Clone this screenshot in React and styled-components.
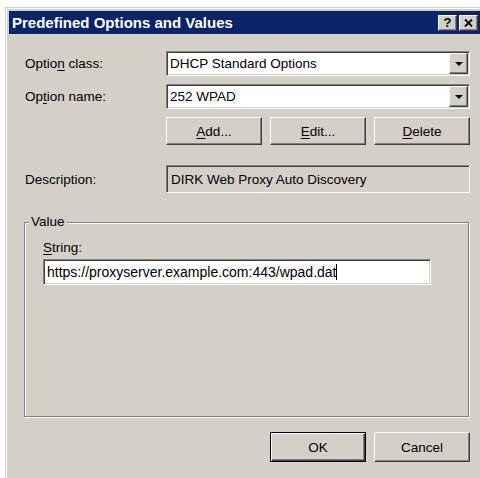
import React from "react";
import styled, { createGlobalStyle } from "styled-components";

const face = "#d4d0c8";

const Global = createGlobalStyle`
  html, body { margin: 0; padding: 0; background: #fff; overflow: hidden; }
  body {
    font-family: "Liberation Sans", Arial, sans-serif;
    font-size: 13.5px;
    color: #000;
  }
`;

const Screen = styled.div`
  width: 480px;
  height: 478px;
  overflow: hidden;
  padding: 7px 0 0 5px;
  box-sizing: border-box;
`;

const Window = styled.div`
  width: 481px;
  height: 480px;
  box-sizing: border-box;
  background: ${face};
  border: 1px solid ${face};
  box-shadow: inset 1px 1px 0 #fff;
  padding: 3px;
  display: flex;
  flex-direction: column;
`;

const TitleBar = styled.div`
  height: 23px;
  background: #0a246a;
  display: flex;
  align-items: center;
  padding: 0 4px 0 3px;
`;

const TitleText = styled.div`
  flex: 1;
  color: #fff;
  font-weight: bold;
  font-size: 15px;
  white-space: nowrap;
`;

const CaptionButtons = styled.div`
  display: flex;
  gap: 2px;
`;

const raised = `
  border: 1px solid;
  border-color: #fff #404040 #404040 #fff;
  box-shadow: inset -1px -1px 0 #808080, inset 1px 1px 0 ${face};
`;

const sunken = `
  border: 1px solid;
  border-color: #808080 #fff #fff #808080;
  box-shadow: inset 1px 1px 0 #404040, inset -1px -1px 0 ${face};
`;

const CapBtn = styled.div`
  width: 19px;
  height: 16px;
  box-sizing: border-box;
  background: ${face};
  ${raised}
  display: flex;
  align-items: center;
  justify-content: center;
  font-weight: bold;
  font-size: 13px;
  line-height: 1;
`;

const Content = styled.div`
  padding: 17px 12px 0 16px;
  display: flex;
  flex-direction: column;
`;

const Row = styled.div`
  display: grid;
  grid-template-columns: 141px 304px;
  align-items: center;
  margin-top: ${(p) => p.$gap || 0}px;
`;

const Label = styled.div`
  white-space: nowrap;
  u { text-decoration: underline; text-underline-offset: 2px; }
`;

const Combo = styled.div`
  height: 25px;
  box-sizing: border-box;
  background: #fff;
  ${sunken}
  display: flex;
  align-items: stretch;
`;

const ComboText = styled.div`
  flex: 1;
  display: flex;
  align-items: center;
  padding-left: 3px;
  white-space: nowrap;
`;

const DropBtn = styled.div`
  width: 19px;
  margin: 1px;
  box-sizing: border-box;
  background: ${face};
  ${raised}
  display: flex;
  align-items: center;
  justify-content: center;

  &::after {
    content: "";
    border-left: 4px solid transparent;
    border-right: 4px solid transparent;
    border-top: 4px solid #000;
    margin-left: 1px;
  }
`;

const ButtonRow = styled.div`
  display: flex;
  gap: 8px;
  justify-content: ${(p) => (p.$end ? "flex-end" : "flex-start")};
  margin-top: ${(p) => p.$gap || 0}px;
`;

const Button = styled.div`
  width: 96px;
  height: ${(p) => p.$h || 28}px;
  box-sizing: border-box;
  background: ${face};
  ${raised}
  ${(p) =>
    p.$default &&
    `
    border: 1px solid #000;
    box-shadow: inset 1px 1px 0 #fff, inset -1px -1px 0 #404040, inset -2px -2px 0 #808080;
  `}
  display: flex;
  align-items: center;
  justify-content: center;
  u { text-decoration: underline; text-underline-offset: 2px; }
`;

const ReadOnly = styled.div`
  height: 28px;
  box-sizing: border-box;
  background: ${face};
  ${sunken}
  display: flex;
  align-items: center;
  padding-left: 4px;
  white-space: nowrap;
`;

const Group = styled.div`
  margin-top: 29px;
  margin-left: -1px;
  width: 445px;
  height: 195px;
  box-sizing: border-box;
  border: 1px solid #808080;
  box-shadow: 1px 1px 0 #fff, inset 1px 1px 0 #fff;
  padding: 0 0 0 18px;
  display: flex;
  flex-direction: column;
`;

const Legend = styled.div`
  align-self: flex-start;
  margin: -9px 0 0 -14px;
  padding: 0 2px;
  line-height: 16px;
  background: ${face};
`;

const FieldLabel = styled(Label)`
  margin-top: 10px;
  line-height: 16px;
`;

const TextField = styled.div`
  margin-top: 3px;
  width: 388px;
  height: 26px;
  box-sizing: border-box;
  background: #fff;
  ${sunken}
  display: flex;
  align-items: center;
  padding-left: 3px;
  font-size: 14px;
  white-space: nowrap;
`;

const Caret = styled.span`
  display: inline-block;
  width: 1px;
  height: 16px;
  background: #000;
`;

export default function App() {
  return (
    <>
      <Global />
      <Screen>
        <Window>
          <TitleBar>
            <TitleText>Predefined Options and Values</TitleText>
            <CaptionButtons>
              <CapBtn>?</CapBtn>
              <CapBtn>
                <svg width="9" height="8" viewBox="0 0 9 8">
                  <path d="M1 0.5 L8 7.5 M8 0.5 L1 7.5" stroke="#000" strokeWidth="1.8" />
                </svg>
              </CapBtn>
            </CaptionButtons>
          </TitleBar>

          <Content>
            <Row>
              <Label>
                Optio<u>n</u> class:
              </Label>
              <Combo>
                <ComboText>DHCP Standard Options</ComboText>
                <DropBtn />
              </Combo>
            </Row>
            <Row $gap={8}>
              <Label>
                Op<u>t</u>ion name:
              </Label>
              <Combo>
                <ComboText>252 WPAD</ComboText>
                <DropBtn />
              </Combo>
            </Row>
            <Row $gap={8}>
              <div />
              <ButtonRow>
                <Button>
                  <u>A</u>dd...
                </Button>
                <Button>
                  <u>E</u>dit...
                </Button>
                <Button>
                  <u>D</u>elete
                </Button>
              </ButtonRow>
            </Row>
            <Row $gap={20}>
              <Label>Description:</Label>
              <ReadOnly>DIRK Web Proxy Auto Discovery</ReadOnly>
            </Row>

            <Group>
              <Legend>Value</Legend>
              <FieldLabel>
                <u>S</u>tring:
              </FieldLabel>
              <TextField>
                https://proxyserver.example.com:443/wpad.dat
                <Caret />
              </TextField>
            </Group>

            <ButtonRow $end $gap={15}>
              <Button $default $h={30}>
                OK
              </Button>
              <Button $h={30}>Cancel</Button>
            </ButtonRow>
          </Content>
        </Window>
      </Screen>
    </>
  );
}
